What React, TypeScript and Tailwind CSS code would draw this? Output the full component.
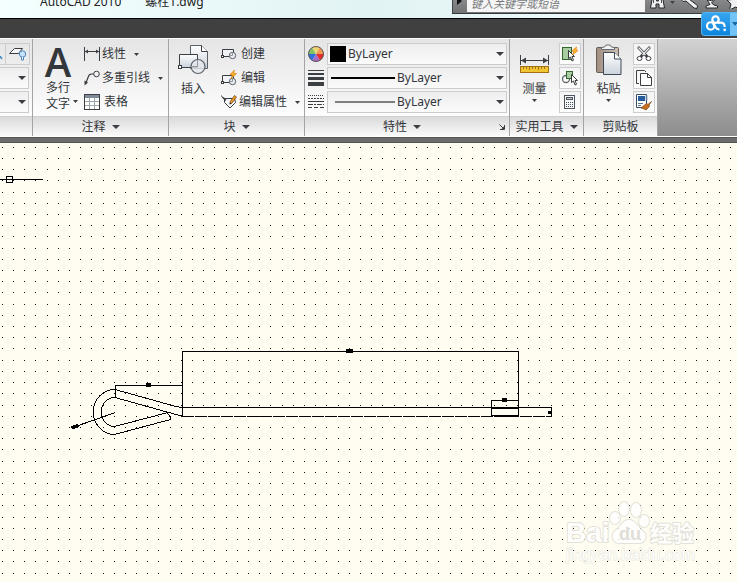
import React from "react";

const INK = "#3b3e43";

/* ---------- small shared pieces ---------- */

const Caret = ({ small = false }: { small?: boolean }) =>
  small ? (
    <svg width="5" height="3" viewBox="0 0 5 3" className="shrink-0" aria-hidden="true">
      <path d="M0 0h5L2.5 3z" fill={INK} />
    </svg>
  ) : (
    <svg width="8" height="4" viewBox="0 0 8 4" className="shrink-0" aria-hidden="true">
      <path d="M0 0h8L4 4z" fill={INK} />
    </svg>
  );

interface PanelProps {
  title: string;
  className: string;
  caret?: boolean;
  launcher?: boolean;
  children: React.ReactNode;
}

const Panel: React.FC<PanelProps> = ({ title, className, caret, launcher, children }) => (
  <section className={`flex shrink-0 flex-col border-r border-[#a4a4a6] ${className}`}>
    <div className="flex h-[77px] bg-linear-to-b from-[#e5e5e6] to-[#fdfdfd] pt-1">
      {children}
    </div>
    <div className="flex h-5 items-center border-t border-[#cfcfd0] bg-linear-to-b from-[#dadadb] to-[#fafafa]">
      <button className="flex flex-1 items-center justify-center gap-1.5">
        <span>{title}</span>
        {caret && <Caret />}
      </button>
      {launcher && (
        <button aria-label="特性设置" className="pr-1">
          <svg width="6" height="6" viewBox="0 0 6 6" aria-hidden="true">
            <path d="M0.5 0.5L4 4M5.5 1v4.500H1" fill="none" stroke={INK} />
            <path d="M2.500 5L5 2.500V5z" fill={INK} />
          </svg>
        </button>
      )}
    </div>
  </section>
);

const SideButton = ({ label, children }: { label: string; children: React.ReactNode }) => (
  <button
    aria-label={label}
    className="flex size-[22px] items-center justify-center border border-[#cdcdcf] bg-linear-to-b from-[#f4f4f4] to-[#fdfdfd]">
    {children}
  </button>
);

const ToolRow = ({
  icon,
  label,
  caret,
  wide,
}: {
  icon: React.ReactNode;
  label: string;
  caret?: boolean;
  wide?: boolean;
}) => (
  <button className="flex h-[22px] items-center whitespace-nowrap">
    {icon}
    <span className={wide ? "ml-1" : "ml-0.5"}>{label}</span>
    {caret && (
      <span className="ml-2">
        <Caret small />
      </span>
    )}
  </button>
);

const PropertySelect = ({ label, sample }: { label: string; sample: React.ReactNode }) => (
  <div className="relative flex h-[22px] items-center border border-[#cbcbcd] bg-linear-to-b from-[#eeeeef] to-[#fbfbfb] pl-0.5">
    {sample}
    <select
      aria-label={label}
      className="h-full min-w-0 flex-1 appearance-none bg-transparent pl-0.5 outline-none">
      <option>ByLayer</option>
    </select>
    <span className="pointer-events-none absolute right-0.5">
      <Caret />
    </span>
  </div>
);

/* ---------- icons ---------- */

const LinearIcon = () => (
  <svg width="16" height="16" viewBox="0 0 16 16" aria-hidden="true">
    <path d="M0.5 1v14M15.500 1v14M1 5.500h14" stroke={INK} fill="none" />
    <path d="M1 5.500l3-2v4zM15 5.500l-3-2v4z" fill={INK} />
  </svg>
);

const LeaderIcon = () => (
  <svg width="16" height="16" viewBox="0 0 16 16" aria-hidden="true">
    <circle cx="12.500" cy="4" r="2.800" fill="#f4f4f5" stroke={INK} />
    <path d="M9.500 4H7.500Q5 4 4.200 7L1.500 14" stroke={INK} fill="none" strokeWidth="1.200" />
    <path d="M0.500 15.500V10.500l3.500 2z" fill={INK} />
  </svg>
);

const TableIcon = () => (
  <svg width="16" height="16" viewBox="0 0 16 16" aria-hidden="true">
    <rect x="0.5" y="0.5" width="15" height="15" fill="#fff" stroke={INK} />
    <path d="M1 1h14v3H1z" fill="#7f8b99" />
    <path d="M1 7.500h14M1 11.500h14M5.500 4v11M10.500 4v11" stroke="#a0a6ad" />
  </svg>
);

const InsertIcon = () => (
  <svg width="31" height="30" viewBox="0 0 31 30" aria-hidden="true">
    <defs>
      <linearGradient id="sheet" x1="0" y1="0" x2="0" y2="1">
        <stop offset="0" stopColor="#fff" />
        <stop offset="1" stopColor="#ccd3dc" />
      </linearGradient>
    </defs>
    <path d="M12.500 0.500h11l6 6V23.500h-17z" fill="url(#sheet)" stroke="#5b6169" />
    <path d="M23.500 0.500v6h6" fill="#fff" stroke={INK} />
    <path d="M1.500 9.500h18v13h-18z" fill="url(#sheet)" stroke={INK} />
    <rect x="0.5" y="20.500" width="3" height="3" fill="#fff" stroke={INK} />
    <circle cx="20" cy="21.500" r="7" fill="#e5e9ee" fillOpacity="0.8" stroke="#5b6169" strokeWidth="1.200" />
    <path d="M13.500 21.500h6V15" fill="none" stroke="#9299a1" />
  </svg>
);

const BlockIcon = ({ spark = false }: { spark?: boolean }) => (
  <svg width="16" height="16" viewBox="0 0 16 16" aria-hidden="true">
    <g transform={spark ? "translate(0 2)" : undefined}>
      <path d="M1.500 3.500h11v7h-11z" fill="#f1f3f6" stroke={INK} />
      <rect x="0" y="9" width="3" height="3" fill={INK} />
      <rect x="1" y="10" width="1" height="1" fill="#fff" />
      <circle cx="11.500" cy="9.500" r="3.200" fill="#e9edf1" stroke="#5b6169" />
      <path d="M9 9.500h2.500V7" fill="none" stroke="#9299a1" />
    </g>
    {spark && (
      <path d="M13.500 0L9 4.500l2.500.5L10 8.500l5.500-5-3-.5z" fill="#f8b42a" stroke="#d97e10" strokeWidth="0.700" />
    )}
  </svg>
);

const AttributeIcon = () => (
  <svg width="16" height="16" viewBox="0 0 16 16" aria-hidden="true">
    <path d="M0.500 1.500Q0.500 3.500 3 4.500M3.500 4.500h10l1 4-5.500 5.500-5.500-5.500z" fill="#f7f8fa" stroke={INK} />
    <path d="M2 3.500l3 3" stroke={INK} strokeWidth="1.500" />
    <path d="M13.500 1.500l2 1.500-4.500 6-2 1 .2-2.500z" fill="#f3a027" stroke="#5e3312" strokeWidth="0.700" />
    <path d="M8.500 10.500l.5-2 1.500 1z" fill="#222" />
  </svg>
);

const ColorWheel = () => (
  <svg width="16" height="16" viewBox="0 0 16 16" aria-hidden="true">
    <path d="M8 8L0.500 8A7.500 7.500 0 0 1 4.200 1.500z" fill="#82c267" />
    <path d="M8 8L4.200 1.500A7.500 7.500 0 0 1 11.800 1.500z" fill="#edd772" />
    <path d="M8 8L11.800 1.500A7.500 7.500 0 0 1 15.500 8z" fill="#ef9954" />
    <path d="M8 8L15.500 8A7.500 7.500 0 0 1 11.800 14.500z" fill="#e52e2e" />
    <path d="M8 8L11.800 14.500A7.500 7.500 0 0 1 4.200 14.500z" fill="#a66bc8" />
    <path d="M8 8L4.200 14.500A7.500 7.500 0 0 1 0.500 8z" fill="#3170dd" />
    <circle cx="8" cy="8" r="7.500" fill="none" stroke="#5c5051" />
  </svg>
);

const LineWeightIcon = () => (
  <svg width="16" height="16" viewBox="0 0 16 16" aria-hidden="true">
    <path d="M0 0h16v1H0zM0 3h16v2H0zM0 7h16v3H0zM0 12h16v4H0z" fill={INK} />
  </svg>
);

const LineTypeIcon = () => (
  <svg width="16" height="16" viewBox="0 0 16 16" stroke={INK} aria-hidden="true">
    <path d="M0 1.500h16" strokeDasharray="1 1" />
    <path d="M0 4.500h16" strokeDasharray="2 1" />
    <path d="M0 7.500h16" />
    <path d="M0 10.500h16" strokeDasharray="5 1 2 1" />
    <path d="M0 13.500h16" strokeDasharray="4 2" />
  </svg>
);

const MeasureIcon = () => (
  <svg width="29" height="18" viewBox="0 0 29 18" aria-hidden="true">
    <path d="M0.500 0v10M28.500 0v10M1 5.500h27" stroke={INK} />
    <path d="M1 5.500l5-3v6zM28 5.500l-5-3v6z" fill={INK} />
    <rect x="0.500" y="11.500" width="28" height="6" fill="#f1c531" stroke="#a5701a" />
    <path d="M3.500 12v2M6.500 12v2M9.500 12v3M12.500 12v2M15.500 12v2M18.500 12v3M21.500 12v2M24.500 12v2" stroke="#a5701a" />
  </svg>
);

const Cursor = () => (
  <path
    d="M0.500 0.500v8l2-1.500 1.500 4 1.500-.7-1.500-3.800h2.500z"
    fill="#fff"
    stroke="#26282b"
    strokeWidth="0.900"
  />
);

const SelectIcon = () => (
  <svg width="18" height="18" viewBox="0 0 18 18" aria-hidden="true">
    <rect x="1.500" y="2.500" width="9" height="12" fill="#a9cda2" stroke="#34632b" />
    <g transform="translate(7 5)">
      <Cursor />
    </g>
    <path d="M15.500 2L11 6l2 .5L11.500 10 17 5.500 15 5z" fill="#fbb829" stroke="#e17d10" strokeWidth="0.700" />
  </svg>
);

const QuickSelectIcon = () => (
  <svg width="18" height="18" viewBox="0 0 18 18" aria-hidden="true">
    <circle cx="5" cy="10" r="3.500" fill="none" stroke="#60656b" strokeWidth="1.300" />
    <rect x="5.500" y="2.500" width="6" height="7" fill="#a9cda2" stroke="#34632b" />
    <g transform="translate(10 5)">
      <Cursor />
    </g>
  </svg>
);

const CalculatorIcon = () => (
  <svg width="12" height="16" viewBox="0 0 12 16" aria-hidden="true">
    <rect x="0.500" y="1.500" width="10" height="13" fill="#f5f6f8" stroke="#4c545e" />
    <rect x="2.500" y="3.500" width="6" height="2" fill="#c3cbd4" stroke="#4c545e" />
    <path d="M2 8.500h7M2 10.500h7M2 12.500h7" stroke="#4c545e" strokeDasharray="1 1" />
  </svg>
);

const PasteIcon = () => (
  <svg width="26" height="32" viewBox="0 0 26 32" aria-hidden="true">
    <defs>
      <linearGradient id="board" x1="0" y1="0" x2="1" y2="0">
        <stop offset="0" stopColor="#a08e80" />
        <stop offset="1" stopColor="#cbbfb3" />
      </linearGradient>
    </defs>
    <rect x="0.500" y="3.500" width="22" height="25" rx="1" fill="url(#board)" stroke="#685b50" />
    <path d="M5.500 5.500V3.500l3-.5L10 1h4l1.500 2 3 .5v2z" fill="#f2f3f5" stroke="#666c73" />
    <path d="M7.500 8.500h11l6.500 6.500v15.500H7.500z" fill="url(#sheet)" stroke="#3d4858" />
    <path d="M18.500 8.500v6.500H25" fill="#fff" stroke="#3d4858" />
  </svg>
);

const CutIcon = () => (
  <svg width="16" height="16" viewBox="0 0 16 16" aria-hidden="true">
    <path d="M2 1l9.500 10M14 1L4.500 11" stroke={INK} strokeWidth="2.600" />
    <path d="M2.500 1.500l7 7.500M13.500 1.500L6.500 9" stroke="#eef0f2" strokeWidth="1.200" />
    <ellipse cx="3.500" cy="12.500" rx="2.500" ry="2" fill="#fff" stroke={INK} />
    <ellipse cx="12.500" cy="12.500" rx="2.500" ry="2" fill="#fff" stroke={INK} />
  </svg>
);

const CopyIcon = () => (
  <svg width="16" height="16" viewBox="0 0 16 16" aria-hidden="true">
    <path d="M3 13.500H0.500v-13h8L10 2" fill="none" stroke={INK} />
    <path d="M4.500 3.500h7l4 4v8h-11z" fill="#fff" stroke={INK} />
    <path d="M11.500 3.500v4h4" fill="none" stroke={INK} />
  </svg>
);

const MatchIcon = () => (
  <svg width="16" height="17" viewBox="0 0 16 17" aria-hidden="true">
    <path d="M0.500 0.500h10v13h-10z" fill="#fff" stroke="#3a4d67" />
    <path d="M2 2h7v5H2z" fill="#275d9c" />
    <path d="M2 9.500h5M2 11.500h3" stroke="#597392" />
    <path d="M10.500 1v6" stroke="#597392" strokeWidth="1.500" />
    <path d="M15.500 7.500L12 10.500l-1.500-1-5.500 4.500 2 .5 3 1.500 3.500-3.500-.5-1.500z" fill="#c96f1c" stroke="#77400e" strokeWidth="0.700" />
  </svg>
);

const LayerIcon = () => (
  <svg width="18" height="16" viewBox="0 0 18 16" aria-hidden="true">
    <path d="M0.500 7.500l5-5h8l-4 5z" fill="#f5f6f7" stroke={INK} />
    <circle cx="13.500" cy="8" r="3.200" fill="#c6e3fa" stroke="#4b86bf" />
    <path d="M12.500 11v3h2v-3" fill="#fff" stroke="#4b86bf" />
  </svg>
);

/* ---------- title bar ---------- */

const TitleBar = () => (
  <header className="h-[18px] overflow-hidden bg-linear-to-r from-[#f4ffff] via-[#e2f3f4] to-[#f3ffff]">
    <div className="-mt-3 flex h-[26px] items-start justify-between">
      <h1 className="flex gap-6 pt-1 pl-10 text-[12px] leading-5 text-[#222]">
        <span>AutoCAD 2010</span>
        <span>螺栓1.dwg</span>
      </h1>
      <div className="flex h-full w-[285px] shrink-0 border-b border-[#38393b] bg-linear-to-b from-[#999] to-[#737476]">
        <button aria-label="展开" className="w-[15px] border-l border-[#444] pl-1">
          <svg width="5" height="8" viewBox="0 0 5 8" aria-hidden="true">
            <path d="M0 0l5 4-5 4z" fill="#111" />
          </svg>
        </button>
        <input
          aria-label="搜索"
          placeholder="键入关键字或短语"
          className="h-6 w-[178px] bg-[#f5f5f5] pt-1.5 pl-1 text-[11px] italic outline-none placeholder:text-[#77797b]"
        />
        <div className="flex flex-1 items-end pb-1 pl-1">
          <svg width="88" height="20" viewBox="0 0 88 20" aria-hidden="true">
            <g fill="#eef0f2" stroke="#25272b">
              <path d="M3.500 8h4v4h2V8h4l2 11h-5.500v-4H7v4H1.500z" />
              <path d="M4.500 11v3M12.500 11v3" stroke="#4e5359" />
              <path d="M21 12h5l-2.500 3z" fill="#404246" stroke="none" />
              <path d="M34 6l4-1 3 3-.5 2.500 8 6-.5 3-3-.5-8-7-3 .5-3-3z" />
              <path d="M57 9l9-4-1 6.500-2.500 2.500 2.500 2 3.500 1v2H57v-2l4-1.500z" />
              <path d="M59 11q4 2 7-1" fill="none" />
              <path d="M86.500 4l2.500 6.500 6 .5-4.500 4 2 6-6-3-6 3 1.500-6-4-4 5.500-.5z" />
            </g>
          </svg>
        </div>
      </div>
    </div>
  </header>
);

const CloudButton = () => (
  <button
    aria-label="上传"
    className="absolute top-3 right-0 z-10 flex h-6 w-9 overflow-hidden rounded-l-sm border border-r-0 border-[#58b4ee] bg-linear-to-b from-[#37a6ef] to-[#0985dc]">
    <svg width="29" height="22" viewBox="0 0 29 22" aria-hidden="true">
      <g fill="none" stroke="#fff" strokeWidth="2.300">
        <circle cx="14" cy="6.500" r="3.300" />
        <circle cx="9" cy="13" r="3.800" />
        <path d="M11.500 10.500l2 3Q15 16.800 18 16.500M16 10Q23.500 8 23.500 14" />
      </g>
      <circle cx="23.500" cy="17" r="1.400" fill="#fff" />
    </svg>
    <span className="flex h-full flex-1 items-center bg-[#72c4f7] pl-0.5">
      <svg width="5" height="4" viewBox="0 0 5 4" aria-hidden="true">
        <path d="M0 0h6L3 4z" fill="#1769a8" />
      </svg>
    </span>
  </button>
);

/* ---------- ribbon ---------- */

const Ribbon = () => (
  <nav className="flex overflow-hidden border-t border-b border-white bg-linear-to-b from-[#d3d3d3] to-[#8d8d8d] text-[12px] leading-4 text-[#33363a]">
    {/* Layers panel, scrolled mostly off to the left */}
    <section className="flex w-[33px] shrink-0 flex-col border-r border-[#a4a4a6]">
      <div className="flex h-[77px] flex-col gap-0.5 bg-linear-to-b from-[#e5e5e6] to-[#fdfdfd] pt-1 pr-0.5">
        <div className="flex h-[22px] justify-end border-y border-r border-[#cdcdcf]">
          <button aria-label="图层状态" className="flex flex-1 items-end pb-1">
            <svg width="3" height="4" viewBox="0 0 3 4" aria-hidden="true">
              <path d="M0 0l2 3" stroke="#3f87c5" strokeWidth="1.500" />
            </svg>
          </button>
          <button aria-label="图层开关" className="flex w-6 items-center justify-center border-l border-[#cdcdcf]">
            <LayerIcon />
          </button>
        </div>
        {["图层", "图层状态管理"].map((name) => (
          <div
            key={name}
            className="relative mr-px flex h-[22px] items-center border-y border-r border-[#cbcbcd] bg-linear-to-b from-[#eeeeef] to-[#fbfbfb]">
            <select aria-label={name} className="w-full appearance-none bg-transparent outline-none" />
            <span className="pointer-events-none absolute right-0.5">
              <Caret />
            </span>
          </div>
        ))}
      </div>
      <div className="h-5 border-t border-[#cfcfd0] bg-linear-to-b from-[#dadadb] to-[#fafafa]" />
    </section>

    <Panel title="注释" className="w-[136px]" caret>
      <button className="flex w-[50px] flex-col items-center">
        <span className="flex h-[37px] items-center font-['Open_Sans',sans-serif] text-[40px] leading-9 font-semibold">
          A
        </span>
        <span>多行</span>
        <span className="relative">
          文字
          <span className="absolute top-1 -right-2 flex">
            <Caret small />
          </span>
        </span>
      </button>
      <div className="flex flex-col gap-0.5 pl-px">
        <ToolRow icon={<LinearIcon />} label="线性" caret />
        <ToolRow icon={<LeaderIcon />} label="多重引线" caret />
        <ToolRow icon={<TableIcon />} label="表格" wide />
      </div>
    </Panel>

    <Panel title="块" className="w-[136px]" caret>
      <button className="flex w-12 flex-col items-center pt-0.5">
        <span className="flex h-9 items-start">
          <InsertIcon />
        </span>
        <span>插入</span>
      </button>
      <div className="flex flex-col gap-0.5 pl-1">
        <ToolRow icon={<BlockIcon />} label="创建" wide />
        <ToolRow icon={<BlockIcon spark />} label="编辑" wide />
        <ToolRow icon={<AttributeIcon />} label="编辑属性" caret />
      </div>
    </Panel>

    <Panel title="特性" className="w-[205px]" caret launcher>
      <div className="flex w-[22px] flex-col items-center gap-2 pt-[3px]">
        <ColorWheel />
        <LineWeightIcon />
        <LineTypeIcon />
      </div>
      <div className="flex flex-1 flex-col gap-0.5 pr-0.5">
        <PropertySelect label="颜色" sample={<span className="size-4 shrink-0 bg-black" />} />
        <PropertySelect
          label="线宽"
          sample={<span className="ml-px h-0.5 w-16 shrink-0 bg-black" />}
        />
        <PropertySelect
          label="线型"
          sample={<span className="ml-[5px] h-0.5 w-[60px] shrink-0 bg-[#7c7e80]" />}
        />
      </div>
    </Panel>

    <Panel title="实用工具" className="w-[74px]" caret>
      <button className="flex flex-1 flex-col items-center pt-1">
        <span className="flex h-[34px] items-center">
          <MeasureIcon />
        </span>
        <span className="mb-0.5">测量</span>
        <Caret small />
      </button>
      <div className="flex flex-col gap-0.5 pr-0.5">
        <SideButton label="全部选择">
          <SelectIcon />
        </SideButton>
        <SideButton label="快速选择">
          <QuickSelectIcon />
        </SideButton>
        <SideButton label="计算器">
          <CalculatorIcon />
        </SideButton>
      </div>
    </Panel>

    <Panel title="剪贴板" className="w-[74px]">
      <button className="flex flex-1 flex-col items-center pt-px">
        <span className="mb-1 flex h-[33px]">
          <PasteIcon />
        </span>
        <span className="mb-0.5">粘贴</span>
        <Caret small />
      </button>
      <div className="flex flex-col gap-0.5 pr-0.5">
        <SideButton label="剪切">
          <CutIcon />
        </SideButton>
        <SideButton label="复制">
          <CopyIcon />
        </SideButton>
        <SideButton label="特性匹配">
          <MatchIcon />
        </SideButton>
      </div>
    </Panel>
  </nav>
);

/* ---------- drawing area ---------- */

const COLS = 180;
const ROWS = 100;

// One-pixel grid dots, snapped to whole pixels
const gridPath = (() => {
  let d = "";
  for (let r = 0; r < ROWS; r++) {
    const y = Math.floor(4.2 + r * 11.21);
    for (let c = 0; c < COLS; c++) {
      d += `M${Math.floor(2.2 + c * 11.2)} ${y}h1v1h-1z`;
    }
  }
  return d;
})();

const Drawing = () => (
  <svg className="absolute inset-0 size-full" shapeRendering="crispEdges" aria-label="螺栓">
    <path d={gridPath} fill="#111" />
    <g transform="translate(0 -143)" fill="none" stroke="#000">
      <path d="M0 179.500h43" />
      <rect x="6.500" y="176.500" width="6" height="6" />

      {/* outer dimension frame */}
      <path d="M182.500 416V351.500H518.500V416" />
      <path d="M115.500 397V385.500H182" />

      {/* bolt shank */}
      <path d="M182 407.500H551.500V416" />
      <path d="M182 416.500H551" strokeDasharray="12 1" />
      <path d="M491 400.500h27M491.500 400v16M491 415.500h27" />
      <path d="M491 408.500h27" />

      {/* hook */}
      <path d="M182 407.500L176 406.500L115 389.500A21.500 22.500 0 0 0 114.500 434.500L170.500 419.500L170 416.500L167 412.500" />
      <path d="M182 416L176 414.500L115 397.500A13.500 14.500 0 0 0 114.500 426.500L168 412.500" />
      <path d="M115.500 412.500L74 427" />

      <g fill="#000" stroke="none">
        <path d="M346 349h7v4h-7zM146 383h5v4h-5zM502 398h5v4h-5zM548 411h4v3h-4z" />
        <path d="M71 426l6-2 2 2-2 2-5 1z" />
      </g>
    </g>
  </svg>
);

const Watermark = () => (
  <svg
    className="absolute right-10 bottom-4 opacity-80"
    width="133"
    height="66"
    viewBox="0 0 133 66"
    role="img"
    aria-label="百度经验">
    <g fill="#fff" stroke="#dddcd4" strokeWidth="2" paintOrder="stroke" strokeLinejoin="round">
      <text x="2" y="42" fontSize="28" fontWeight="700" fontFamily="Liberation Sans, sans-serif">
        Bai
      </text>
      <ellipse cx="51" cy="18" rx="5" ry="6" />
      <ellipse cx="60" cy="9" rx="5" ry="7" />
      <ellipse cx="72" cy="10" rx="5" ry="7" />
      <ellipse cx="80" cy="21" rx="5" ry="6" />
      <path d="M65 20C58 20 57 27 51 31C46 35 49 43 55 43H75C82 43 84 35 79 31C73 27 72 20 65 20z" />
      <text x="86" y="41" fontSize="22" fontWeight="700" fontFamily="Noto Sans CJK SC, sans-serif">
        经验
      </text>
      <text x="2" y="60" fontSize="16" strokeWidth="1" fontFamily="Liberation Sans, sans-serif">
        jingyan.baidu.com
      </text>
    </g>
    <text x="55" y="40" fontSize="18" fontWeight="700" fill="#d8d7d0" fontFamily="Liberation Sans, sans-serif">
      du
    </text>
  </svg>
);

export default function App() {
  return (
    <div className="relative flex min-h-screen flex-col overflow-hidden bg-[#fffdf1] font-['Noto_Sans','Noto_Sans_CJK_SC',sans-serif]">
      <TitleBar />
      <CloudButton />
      <div className="h-5 border-t border-black bg-[#404040]" />
      <Ribbon />
      <div className="h-1.5 border-y border-[#555] bg-[#6b6b6b]" />
      <main className="relative flex-1">
        <Drawing />
        <Watermark />
      </main>
    </div>
  );
}
